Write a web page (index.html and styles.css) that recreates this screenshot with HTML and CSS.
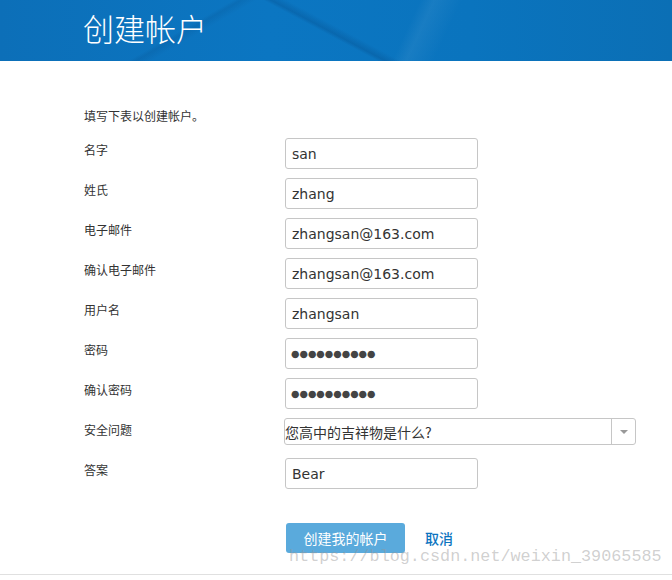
FILE: index.html
```html
<!DOCTYPE html>
<html lang="zh">
<head>
<meta charset="utf-8">
<title>创建帐户</title>
<link rel="stylesheet" href="styles.css">
</head>
<body>
<header class="banner">
  <h1 class="banner-title">创建帐户</h1>
</header>
<main class="content">
  <p class="intro">填写下表以创建帐户。</p>
  <form class="form">
    <label class="label">名字</label>
    <input class="field" type="text" value="san">
    <label class="label">姓氏</label>
    <input class="field" type="text" value="zhang">
    <label class="label">电子邮件</label>
    <input class="field" type="text" value="zhangsan@163.com">
    <label class="label">确认电子邮件</label>
    <input class="field" type="text" value="zhangsan@163.com">
    <label class="label">用户名</label>
    <input class="field" type="text" value="zhangsan">
    <label class="label">密码</label>
    <input class="field password" type="text" value="●●●●●●●●●●">
    <label class="label">确认密码</label>
    <input class="field password" type="text" value="●●●●●●●●●●">
    <label class="label">安全问题</label>
    <div class="select">
      <span class="select-text">您高中的吉祥物是什么?</span>
      <span class="select-arrow"><span class="caret"></span></span>
    </div>
    <label class="label">答案</label>
    <input class="field" type="text" value="Bear">
  </form>
  <div class="actions">
    <button class="btn" type="button">创建我的帐户</button>
    <a class="cancel" href="#">取消</a>
  </div>
</main>
<div class="footer-line"></div>
<div class="watermark">https://blog.csdn.net/weixin_39065585</div>
</body>
</html>
```
FILE: styles.css
```css
html, body {
  margin: 0;
  padding: 0;
  background: #fff;
}
body {
  position: relative;
  width: 672px;
  height: 580px;
  overflow: hidden;
  font-family: "Noto Sans CJK SC", "DejaVu Sans", sans-serif;
  color: #333;
}
.banner {
  height: 61px;
  background:
    linear-gradient(28deg, transparent 48%, rgba(0,40,90,0.18) 49%, transparent 51%),
    linear-gradient(150deg, transparent 30%, rgba(0,50,100,0.12) 31%, transparent 33%),
    linear-gradient(115deg, transparent 60%, rgba(255,255,255,0.06) 62%, transparent 66%),
    linear-gradient(90deg, #0c6fb8 0%, #0b76c2 40%, #0a74be 70%, #0b6fb5 100%);
  box-sizing: border-box;
  padding-left: 83px;
}
.banner-title {
  margin: 0;
  font-family: "Noto Sans CJK SC", sans-serif;
  font-weight: 300;
  font-size: 31px;
  line-height: 55px;
  color: #fff;
}
.content {
  padding: 47px 0 0 84px;
}
.intro {
  margin: 0 0 14px;
  font-size: 12px;
  line-height: 16px;
}
.form {
  display: grid;
  grid-template-columns: 201px 193px;
  grid-auto-rows: 31px;
  row-gap: 9px;
}
.label {
  font-size: 12px;
  line-height: 16px;
  padding-top: 4px;
}
.field {
  box-sizing: border-box;
  width: 193px;
  height: 31px;
  border: 1px solid #c6c6c6;
  border-radius: 3px;
  padding: 0 6px;
  font-family: "DejaVu Sans", sans-serif;
  font-size: 14px;
  color: #333;
  outline: none;
}
.password {
  font-size: 9.7px;
  color: #444;
  letter-spacing: 0;
  padding-left: 5px;
}
.select {
  box-sizing: border-box;
  width: 352px;
  height: 27px;
  margin-left: -1px;
  border: 1px solid #c6c6c6;
  border-radius: 3px;
  display: flex;
  align-items: center;
  align-self: start;
}
.select-text {
  flex: 1;
  font-size: 14px;
  color: #333;
}
.select-arrow {
  width: 23px;
  height: 100%;
  border-left: 1px solid #c6c6c6;
  display: flex;
  align-items: center;
  justify-content: center;
}
.caret {
  width: 0;
  height: 0;
  border-left: 4px solid transparent;
  border-right: 4px solid transparent;
  border-top: 4px solid #999;
}
.actions {
  display: flex;
  align-items: center;
  gap: 20px;
  padding: 34px 0 0 202px;
}
.btn {
  width: 119px;
  height: 30px;
  border: none;
  border-radius: 3px;
  background: #5aaadc;
  color: #fff;
  font-family: "Noto Sans CJK SC", sans-serif;
  font-size: 14px;
  padding: 0;
}
.cancel {
  font-size: 14px;
  font-weight: 500;
  color: #0b74bf;
  text-decoration: none;
}
.footer-line {
  position: absolute;
  left: 0;
  right: 0;
  top: 574px;
  height: 1px;
  background: #e0e0e0;
}
.watermark {
  position: absolute;
  left: 289px;
  top: 547px;
  font-family: "Liberation Mono", monospace;
  font-size: 16.8px;
  color: rgba(150,150,150,0.45);
  white-space: nowrap;
}
```
